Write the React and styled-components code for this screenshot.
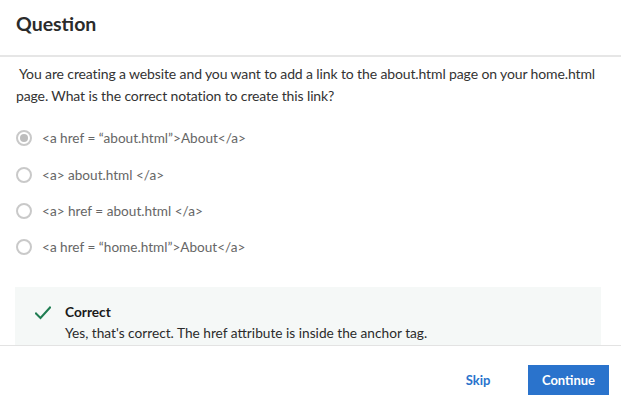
import styled, { createGlobalStyle } from "styled-components";

const GlobalStyle = createGlobalStyle`
  html, body {
    margin: 0;
    padding: 0;
    background: #ffffff;
  }
  body {
    font-family: "Lato", "Liberation Sans", sans-serif;
    color: #333333;
  }
`;

const Modal = styled.div`
  display: flex;
  flex-direction: column;
  width: 621px;
  height: 413px;
  overflow: hidden;
`;

const Header = styled.header`
  display: flex;
  align-items: center;
  height: 57px;
  padding: 0 16px 9px 16px;
  box-sizing: border-box;
  border-bottom: 2px solid #e6e6e6;
`;

const Title = styled.h1`
  margin: 0;
  font-size: 19.5px;
  font-weight: 700;
  color: #2b2b2b;
`;

const Body = styled.main`
  flex: 1;
  overflow: hidden;
  padding: 6px 20px 0 16px;
`;

const Prompt = styled.p`
  margin: 0;
  font-size: 14px;
  line-height: 22px;
  letter-spacing: -0.12px;
  text-indent: 3px;
  color: #333333;
`;

const Options = styled.ul`
  list-style: none;
  margin: 13px 0 0;
  padding: 0;
`;

const Option = styled.li`
  display: flex;
  align-items: center;
  gap: 10px;
  height: 36.4px;
  font-size: 13.6px;
  color: #666666;
`;

const Radio = styled.span`
  display: flex;
  align-items: center;
  justify-content: center;
  width: 16px;
  height: 16px;
  box-sizing: border-box;
  border: 2px solid #c9c9c9;
  border-radius: 50%;
  background: #ffffff;

  &::after {
    content: "";
    width: 8px;
    height: 8px;
    border-radius: 50%;
    background: ${(p) => (p.$checked ? "#bdbdbd" : "transparent")};
  }
`;

const Feedback = styled.section`
  display: flex;
  gap: 14px;
  margin-top: 21px;
  margin-left: -1px;
  padding: 16px 20px 20px 20px;
  background: #f5f8f7;
`;

const CheckIcon = styled.svg`
  flex: none;
  width: 16px;
  height: 14px;
  margin-top: 3px;
`;

const FeedbackText = styled.div`
  display: flex;
  flex-direction: column;
  gap: 3px;
  font-size: 13.7px;
  line-height: 18px;
  color: #2b2b2b;
`;

const FeedbackTitle = styled.strong`
  font-weight: 700;
  color: #1a1a1a;
`;

const Footer = styled.footer`
  display: flex;
  justify-content: flex-end;
  align-items: center;
  gap: 10px;
  height: 68px;
  padding: 0 12px 0 0;
  box-sizing: border-box;
  border-top: 1px solid #e3e3e3;
`;

const Button = styled.button`
  width: ${(p) => (p.$primary ? "81px" : "80px")};
  height: 30px;
  border: none;
  font-family: inherit;
  font-size: 13px;
  font-weight: 700;
  cursor: pointer;
  background: ${(p) => (p.$primary ? "#2a73cc" : "transparent")};
  color: ${(p) => (p.$primary ? "#ffffff" : "#2a73cc")};
`;

const options = [
  { label: "<a href = \u201cabout.html\u201d>About</a>", checked: true },
  { label: "<a> about.html </a>" },
  { label: "<a> href = about.html </a>" },
  { label: "<a href = \u201chome.html\u201d>About</a>" },
];

export default function App() {
  return (
    <>
      <GlobalStyle />
      <Modal>
        <Header>
          <Title>Question</Title>
        </Header>
        <Body>
          <Prompt>
            You are creating a website and you want to add a link to the
            about.html page on your home.html page. What is the correct
            notation to create this link?
          </Prompt>
          <Options>
            {options.map((o) => (
              <Option key={o.label}>
                <Radio $checked={o.checked} />
                {o.label}
              </Option>
            ))}
          </Options>
          <Feedback>
            <CheckIcon viewBox="0 0 16 14" fill="none">
              <path
                d="M1 7.5 L5.5 12 L15 1.5"
                stroke="#1f7d52"
                strokeWidth="2"
                strokeLinecap="square"
              />
            </CheckIcon>
            <FeedbackText>
              <FeedbackTitle>Correct</FeedbackTitle>
              <span>Yes, that's correct. The href attribute is inside the anchor tag.</span>
            </FeedbackText>
          </Feedback>
        </Body>
        <Footer>
          <Button>Skip</Button>
          <Button $primary>Continue</Button>
        </Footer>
      </Modal>
    </>
  );
}
